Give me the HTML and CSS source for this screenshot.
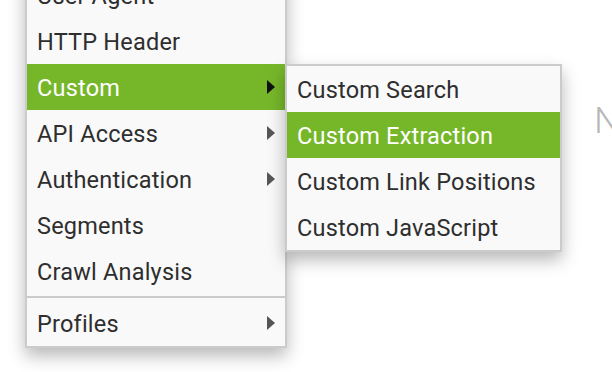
FILE: index.html
```html
<!DOCTYPE html>
<html>
<head>
    <link rel="stylesheet" href="styles.css">
    <title>Configuration</title>
</head>
<body>
    <div class="page">
        <!-- Configuration menu -->
        <div class="menu">
            <div class="menu-item">User Agent</div>
            <div class="menu-item">HTTP Header</div>
            <div class="menu-item has-sub active">
                Custom
                <span class="arrow"></span>
                <div class="submenu">
                    <div class="menu-item">Custom Search</div>
                    <div class="menu-item active">Custom Extraction</div>
                    <div class="menu-item">Custom Link Positions</div>
                    <div class="menu-item">Custom JavaScript</div>
                </div>
            </div>
            <div class="menu-item has-sub">API Access <span class="arrow"></span></div>
            <div class="menu-item has-sub">Authentication <span class="arrow"></span></div>
            <div class="menu-item">Segments</div>
            <div class="menu-item">Crawl Analysis</div>
            <div class="separator"></div>
            <div class="menu-item has-sub">Profiles <span class="arrow"></span></div>
        </div>

        <div class="content">
            <div class="content-title">Name</div>
        </div>
    </div>
</body>
</html>
```

FILE: styles.css
```css
body {
    margin: 0;
    padding: 0;
    background-color: #ffffff;
    font-family: Roboto, 'Liberation Sans', Arial, sans-serif;
    overflow: hidden;
    height: 372px;
}

.page {
    display: flex;
    align-items: flex-start;
}

/* Main menu */
.menu {
    width: 258px;
    flex-shrink: 0;
    margin-left: 25px;
    margin-top: -30px;
    background-color: #f9f9f9;
    border: 2px solid #cbcbcb;
    box-shadow: 0 8px 16px rgba(0, 0, 0, 0.28);
    position: relative;
    z-index: 2;
}

.menu-item {
    height: 46px;
    box-sizing: border-box;
    padding: 2px 11px 0 10px;
    display: flex;
    align-items: center;
    font-size: 23.5px;
    letter-spacing: 0.2px;
    color: #2e2e2e;
    position: relative;
    white-space: nowrap;
    cursor: pointer;
}

.menu-item.active {
    background-color: #76b72a;
    color: #ffffff;
}

.arrow {
    position: absolute;
    right: 10px;
    top: 16px;
    width: 0;
    height: 0;
    border-top: 7px solid transparent;
    border-bottom: 7px solid transparent;
    border-left: 8px solid #555555;
}

.menu-item.active > .arrow {
    border-left-color: #111111;
}

.separator {
    margin: 2px 0;
    border-top: 2px solid #cbcbcb;
}

/* Flyout submenu */
.submenu {
    position: absolute;
    top: 0;
    left: 258px;
    width: 273px;
    background-color: #f9f9f9;
    border: 2px solid #cbcbcb;
    box-shadow: 0 8px 16px rgba(0, 0, 0, 0.28);
    letter-spacing: 0.2px;
}

.submenu .menu-item {
    color: #2e2e2e;
}

.submenu .menu-item.active {
    color: #ffffff;
}

/* Page content behind the menu */
.content {
    flex: 1;
    padding-left: 307px;
    padding-top: 99px;
}

.content-title {
    font-size: 37px;
    font-weight: 300;
    color: #b8b8b8;
    white-space: nowrap;
}
```
